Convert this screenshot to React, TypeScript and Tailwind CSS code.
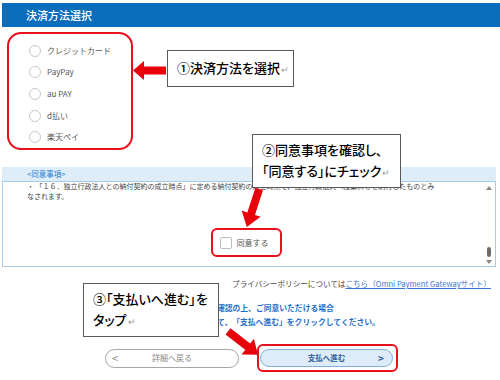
import React from 'react';

const payments = ['クレジットカード', 'PayPay', 'au PAY', 'd払い', '楽天ペイ'];

function Callout({ className, lines }: { className: string; lines: string[] }) {
  return (
    <div
      className={`absolute flex flex-col justify-center border border-[#595959] bg-white pl-[9px] text-[13px] font-medium leading-[21px] text-black [font-feature-settings:'palt'] ${className}`}
    >
      {lines.map((l, i) => (
        <div key={i} className="whitespace-nowrap">
          {l}
          {i === lines.length - 1 && <span className="ml-[1px] text-[9px] font-normal text-[#999]">↵</span>}
        </div>
      ))}
    </div>
  );
}

export default function App() {
  return (
    <div className="relative h-[380px] w-[500px] overflow-hidden bg-white font-['Noto_Sans_CJK_JP','Noto_Sans',sans-serif]">
      {/* header */}
      <div className="ml-[2px] mt-[3px] flex h-[24px] items-center bg-[#0a6ebd] pl-[24px] text-[11px] font-medium text-white">
        決済方法選択
      </div>

      {/* payment list */}
      <div className="ml-[7px] mt-[5px] flex h-[118px] w-[126px] flex-col rounded-[14px] border-2 border-[#e8101c] pl-[20px] pt-[6px]">
        {payments.map((p) => (
          <div key={p} className="flex h-[22.5px] items-center gap-[6px]">
            <span className="h-[12px] w-[12px] rounded-full border border-[#c8c8c8] bg-white" />
            <span className="text-[8px] text-[#555]">{p}</span>
          </div>
        ))}
      </div>

      {/* agreement */}
      <div className="mx-[2px] mt-[17px] flex h-[14px] w-[494px] items-center bg-[#deedf8] pl-[25px] text-[7.5px] text-[#2b7fd0]">
        &lt;同意事項&gt;
      </div>
      <div className="mx-[2px] flex h-[86px] w-[494px] border border-[#a9cbe6]">
        <div className="flex flex-1 flex-col">
          <div className="pl-[24px] text-[7px] leading-[9.5px] text-[#444]">
            <div className="whitespace-nowrap">
              ・ 「１６．独立行政法人との納付契約の成立時点」に定める納付契約の成立時点で、独立行政法人へ授業料等を納付したものとみ
            </div>
            <div className="whitespace-nowrap">なされます。</div>
          </div>
          <div className="mt-[27px] flex justify-center pr-[68px] pl-[72px]">
            <div className="flex h-[29px] w-[71px] items-center gap-[5px] rounded-[6px] border-2 border-[#e8101c] pl-[7px]">
              <span className="h-[12px] w-[12px] rounded-[2px] border border-[#bdbdbd] bg-white" />
              <span className="text-[8px] text-[#555]">同意する</span>
            </div>
          </div>
        </div>
        <div className="flex w-[10px] flex-col items-center pb-[2px] pt-[4px] pr-[2px]">
          <span className="h-0 w-0 border-x-[3px] border-b-[4px] border-x-transparent border-b-[#888]" />
          <div className="flex-1" />
          <span className="h-[10px] w-[4px] rounded-full bg-[#6d6d6d]" />
          <span className="mt-[3px] h-0 w-0 border-x-[3px] border-t-[4px] border-x-transparent border-t-[#888]" />
        </div>
      </div>

      {/* privacy */}
      <div className="mt-[12px] whitespace-nowrap pr-[9px] text-right text-[7.6px] leading-[10px] text-[#444]">
        プライバシーポリシーについては
        <span className="text-[#3a78d6] underline">こちら（Omni Payment Gatewayサイト）</span>
      </div>

      {/* notes */}
      <div className="mt-[12px] text-center text-[7.8px] font-bold leading-[14px] text-[#1f6fc9]">
        <div className="whitespace-nowrap pl-[4px]">同意事項をご確認の上、ご同意いただける場合</div>
        <div className="whitespace-nowrap pr-[12px]">「同意する」にチェックを入れて、「支払へ進む」をクリックしてください。</div>
      </div>

      {/* buttons */}
      <div className="mt-[15px] flex items-center justify-center gap-[18px] pl-[3px]">
        <div className="grid h-[19px] w-[134px] grid-cols-[22px_1fr_22px] items-center rounded-full border border-[#a6a6a6] bg-white">
          <span className="pl-[6px] text-[11px] leading-none text-[#888]">&lt;</span>
          <span className="text-center text-[8px] text-[#8a8a8a]">詳細へ戻る</span>
          <span />
        </div>
        <div className="rounded-[6px] border-2 border-[#e8101c] py-[3px] pl-[1px] pr-[3px]">
          <div className="grid h-[18px] w-[133px] grid-cols-[22px_1fr_22px] items-center rounded-full border border-[#7fb0dd] bg-[#ddecf8]">
            <span />
            <span className="text-center text-[7.5px] font-bold text-[#2f5f9a]">支払へ進む</span>
            <span className="pr-[8px] text-right text-[10px] font-bold leading-none text-[#2f5f9a]">&gt;</span>
          </div>
        </div>
      </div>

      {/* annotations */}
      <Callout className="left-[167px] top-[50px] h-[37px] w-[127px]" lines={['①決済方法を選択']} />
      <svg className="absolute left-[133px] top-[60px]" width="33" height="21" viewBox="0 0 33 21">
        <polygon points="0,10.5 11,1 11,6.5 33,6.5 33,14.5 11,14.5 11,20" fill="#e8000b" />
      </svg>

      <Callout className="left-[252px] top-[134px] h-[54px] w-[149px]" lines={['②同意事項を確認し、', '「同意する」にチェック']} />
      <svg className="absolute left-[236px] top-[186px]" width="34" height="44" viewBox="0 0 34 44">
        <g transform="translate(17 22) rotate(18)">
          <polygon points="-4,-20 4,-20 4,6 10,6 0,20 -10,6 -4,6" fill="#e8000b" />
        </g>
      </svg>

      <Callout className="left-[83px] top-[283px] h-[54px] w-[136px]" lines={['③「支払いへ進む」を', 'タップ']} />
      <svg className="absolute left-[222px] top-[322px]" width="42" height="42" viewBox="0 0 42 42">
        <g transform="translate(21 21) rotate(38)">
          <polygon points="-19,-4 6,-4 6,-10 19,0 6,10 6,4 -19,4" fill="#e8000b" />
        </g>
      </svg>
    </div>
  );
}
